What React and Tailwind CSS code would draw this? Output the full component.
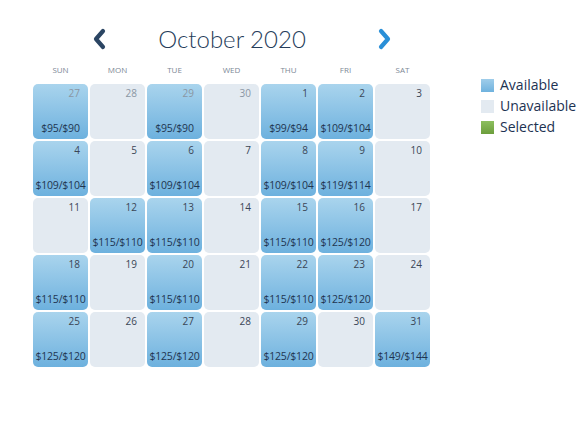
import React from 'react'

const days = ['SUN', 'MON', 'TUE', 'WED', 'THU', 'FRI', 'SAT']

// null price = unavailable
const cells = [
  { d: 27, p: '$95/$90', past: true }, { d: 28, past: true }, { d: 29, p: '$95/$90', past: true }, { d: 30, past: true },
  { d: 1, p: '$99/$94' }, { d: 2, p: '$109/$104' }, { d: 3 },
  { d: 4, p: '$109/$104' }, { d: 5 }, { d: 6, p: '$109/$104' }, { d: 7 }, { d: 8, p: '$109/$104' }, { d: 9, p: '$119/$114' }, { d: 10 },
  { d: 11 }, { d: 12, p: '$115/$110' }, { d: 13, p: '$115/$110' }, { d: 14 }, { d: 15, p: '$115/$110' }, { d: 16, p: '$125/$120' }, { d: 17 },
  { d: 18, p: '$115/$110' }, { d: 19 }, { d: 20, p: '$115/$110' }, { d: 21 }, { d: 22, p: '$115/$110' }, { d: 23, p: '$125/$120' }, { d: 24 },
  { d: 25, p: '$125/$120' }, { d: 26 }, { d: 27, p: '$125/$120' }, { d: 28 }, { d: 29, p: '$125/$120' }, { d: 30 }, { d: 31, p: '$149/$144' },
]

const Chevron = ({ dir, color }) => (
  <svg width="16" height="24" viewBox="0 0 16 24">
    <path
      d={dir === 'left' ? 'M12 4 L5 12 L12 20' : 'M4 4 L11 12 L4 20'}
      fill="none"
      stroke={color}
      strokeWidth="4.2"
      strokeLinecap="round"
      strokeLinejoin="round"
    />
  </svg>
)

const App = () => {
  return (
    <div className="w-[588px] h-[425px] bg-white flex pl-[33px] pt-[24px]" style={{ fontFamily: '"Open Sans", sans-serif' }}>

      {/* Calendar */}
      <div className="w-[397px]">
        <div className="flex items-center h-[30px]">
          <div className="ml-[58px]"><Chevron dir="left" color="#2b4563" /></div>
          <div className="flex-1 text-center pr-[20px] text-[24px] font-light text-[#263d5a] leading-none" style={{ fontFamily: 'Lato, sans-serif' }}>
            October 2020
          </div>
          <div className="mr-[37px]"><Chevron dir="right" color="#2a8fd7" /></div>
        </div>

        <div className="grid grid-cols-7 gap-[2px] mt-[9px] mb-[7px]">
          {days.map(d => (
            <div key={d} className="text-center text-[8px] text-[#7d8896] leading-[14px]">{d}</div>
          ))}
        </div>

        <div className="grid grid-cols-7 gap-[2px]">
          {cells.map((c, i) => (
            <div
              key={i}
              className={`h-[55px] rounded-[5px] flex flex-col justify-between pt-[1px] pb-[4px] ${c.p
                ? 'bg-gradient-to-b from-[#a9d4ed] to-[#6db1de]'
                : 'bg-[#e3eaf1]'}`}
            >
              <div className={`text-right pr-[8px] text-[10px] leading-[16px] ${c.past ? 'text-[#8a96a3]' : 'text-[#3a4656]'}`}>
                {c.d}
              </div>
              {c.p && (
                <div className="text-center text-[10.5px] leading-[14px] text-[#1f3550] whitespace-nowrap tracking-[-0.2px]">
                  {c.p}
                </div>
              )}
            </div>
          ))}
        </div>
      </div>

      {/* Legend */}
      <div className="ml-[51px] mt-[54px] flex flex-col gap-[7px]">
        <div className="flex items-center gap-[6px]">
          <span className="w-[13px] h-[13px] bg-gradient-to-b from-[#9fcdea] to-[#6fb2de]" />
          <span className="text-[14px] leading-[14px] text-[#1d3252]">Available</span>
        </div>
        <div className="flex items-center gap-[6px]">
          <span className="w-[13px] h-[13px] bg-[#e3eaf1]" />
          <span className="text-[14px] leading-[14px] text-[#1d3252]">Unavailable</span>
        </div>
        <div className="flex items-center gap-[6px]">
          <span className="w-[13px] h-[13px] bg-gradient-to-b from-[#8cbf5e] to-[#6c9e3c]" />
          <span className="text-[14px] leading-[14px] text-[#1d3252]">Selected</span>
        </div>
      </div>
    </div>
  )
}

export default App
